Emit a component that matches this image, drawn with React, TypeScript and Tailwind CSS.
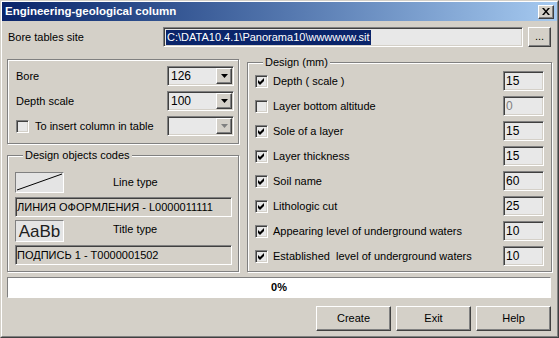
const font = "font-['Liberation_Sans',Arial,sans-serif]";
const sunken =
  "border border-t-[#808080] border-l-[#808080] border-b-white border-r-white shadow-[inset_1px_1px_0_#404040,inset_-1px_-1px_0_#d4d0c8]";
const raised =
  "border border-t-white border-l-white border-b-[#404040] border-r-[#404040] shadow-[inset_-1px_-1px_0_#808080]";
const etched = "border border-[#808080] shadow-[1px_1px_0_#fff,inset_1px_1px_0_#fff]";

function Checkbox({ checked }: { checked?: boolean }) {
  return (
    <div className={`w-[13px] h-[13px] shrink-0 bg-[#e8e8e8] ${sunken}`}>
      {checked && (
        <svg width="11" height="11" viewBox="0 0 11 11">
          <path d="M2 4 L4 6 L8 2 L8 5 L4 9 L2 7 Z" fill="#000" />
        </svg>
      )}
    </div>
  );
}

function Combo({ value, disabled }: { value?: string; disabled?: boolean }) {
  return (
    <div className={`w-[67px] h-[20px] p-[1px] bg-[#e8e8e8] flex items-center ${sunken}`}>
      <span className="flex-1 pl-[2px] leading-none text-[12px]">{value}</span>
      <div className={`w-[16px] h-[16px] bg-[#d4d0c8] flex items-center justify-center ${raised}`}>
        <svg width="7" height="4" viewBox="0 0 7 4">
          <path d="M0 0H7L3.5 4Z" fill={disabled ? "#808080" : "#000"} />
        </svg>
      </div>
    </div>
  );
}

const rows: [string, boolean, string][] = [
  ["Depth ( scale )", true, "15"],
  ["Layer bottom altitude", false, "0"],
  ["Sole of a layer", true, "15"],
  ["Layer thickness", true, "15"],
  ["Soil name", true, "60"],
  ["Lithologic cut", true, "25"],
  ["Appearing level of underground waters", true, "10"],
  ["Established  level of underground waters", true, "10"],
];

export default function App() {
  return (
    <div className={`w-[559px] h-[338px] text-[11px] text-black ${font} border border-t-[#d4d0c8] border-l-[#d4d0c8] border-r-[#404040] border-b-[#404040]`}>
      <div className="h-full flex flex-col bg-[#d4d0c8] border border-t-white border-l-white border-r-[#808080] border-b-[#808080]">
        {/* Title bar */}
        <div className="h-[19px] shrink-0 flex items-center justify-between px-[3px] bg-linear-to-r from-[#0a246a] to-[#a6caf0]">
          <span className="text-white font-bold text-[11.5px]">Engineering-geological column</span>
          <div className={`w-[16px] h-[14px] bg-[#d4d0c8] flex items-center justify-center ${raised}`}>
            <svg width="8" height="7" viewBox="0 0 8 7">
              <path d="M0 0h2l2 2.5L6 0h2L5 3.5 8 7H6L4 4.5 2 7H0l3-3.5Z" fill="#000" />
            </svg>
          </div>
        </div>

        {/* Bore tables site */}
        <div className="mt-[6px] h-[20px] flex items-center pl-[6px] pr-[6px]">
          <span className="w-[155px]">Bore tables site</span>
          <div className={`w-[360px] h-[20px] px-[2px] flex items-center bg-[#e8e8e8] ${sunken}`}>
            <span className="bg-[#0a246a] text-white text-[11px] leading-[15px] px-[1px]">
              C:\DATA10.4.1\Panorama10\wwwwww.sit
            </span>
          </div>
          <div className={`ml-[5px] w-[23px] h-[20px] flex items-center justify-center bg-[#d4d0c8] ${raised}`}>
            <span className="leading-none -mt-[2px]">...</span>
          </div>
        </div>

        {/* Groups */}
        <div className="mt-[8px] flex pl-[5px]">
          <div className="w-[232px] flex flex-col">
            <div className={`mt-[4px] h-[85px] pt-[6px] pl-[8px] pr-[4px] flex flex-col gap-[5px] ${etched}`}>
              <div className="h-[20px] flex items-center justify-between">
                <span>Bore</span>
                <Combo value="126" />
              </div>
              <div className="h-[20px] flex items-center justify-between">
                <span>Depth scale</span>
                <Combo value="100" />
              </div>
              <div className="h-[20px] flex items-center justify-between">
                <div className="flex items-center gap-[6px]">
                  <Checkbox />
                  <span>To insert column in table</span>
                </div>
                <Combo disabled />
              </div>
            </div>

            <fieldset className={`mt-[4px] h-[124px] pl-[7px] pt-[10px] ${etched}`}>
              <legend className="ml-[8px] px-[2px] leading-[14px] bg-[#d4d0c8]">Design objects codes</legend>
              <div className="flex items-center">
                <div className="w-[49px] h-[21px] bg-[#e4e4e4] border border-t-[#808080] border-l-[#808080] border-b-white border-r-white">
                  <svg width="47" height="19" viewBox="0 0 47 19">
                    <line x1="1" y1="17" x2="46" y2="1" stroke="#000" strokeWidth="1" />
                  </svg>
                </div>
                <span className="ml-[49px]">Line type</span>
              </div>
              <div className={`mt-[4px] w-[217px] h-[20px] pl-[1px] flex items-center ${sunken}`}>
                ЛИНИЯ ОФОРМЛЕНИЯ - L0000011111
              </div>
              <div className="mt-[3px] flex items-center">
                <div className="w-[49px] h-[22px] bg-[#e4e4e4] border border-t-[#808080] border-l-[#808080] border-b-white border-r-white flex items-center justify-center">
                  <span className="text-[17px] leading-none text-[#202020]">AaBb</span>
                </div>
                <span className="ml-[49px] -mt-[3px]">Title type</span>
              </div>
              <div className={`mt-[3px] w-[217px] h-[20px] pl-[1px] flex items-center ${sunken}`}>
                ПОДПИСЬ 1 - T0000001502
              </div>
            </fieldset>
          </div>

          <fieldset className={`ml-[8px] w-[305px] h-[217px] pl-[7px] pr-[7px] pt-[2px] flex flex-col gap-[5px] ${etched}`}>
            <legend className="ml-[8px] px-[2px] leading-[14px] bg-[#d4d0c8]">Design (mm)</legend>
            {rows.map(([label, checked, value]) => (
              <div key={label} className="h-[20px] flex items-center justify-between">
                <div className="flex items-center gap-[5px]">
                  <Checkbox checked={checked} />
                  <span className="whitespace-pre">{label}</span>
                </div>
                <div className={`w-[41px] h-[20px] pl-[2px] flex items-center text-[12px] bg-[#e8e8e8] ${sunken} ${checked ? "text-black" : "text-[#808080]"}`}>
                  {value}
                </div>
              </div>
            ))}
          </fieldset>
        </div>

        {/* Progress */}
        <div className="mt-[5px] ml-[5px] w-[544px] h-[21px] bg-white flex items-center justify-center border border-t-[#808080] border-l-[#808080] border-b-white border-r-white">
          <span className="font-bold text-[11px]">0%</span>
        </div>

        {/* Buttons */}
        <div className="mt-[8px] flex justify-end gap-[5px] pr-[6px]">
          {["Create", "Exit", "Help"].map((b) => (
            <div key={b} className={`w-[75px] h-[25px] flex items-center justify-center bg-[#d4d0c8] ${raised}`}>
              {b}
            </div>
          ))}
        </div>
      </div>
    </div>
  );
}
